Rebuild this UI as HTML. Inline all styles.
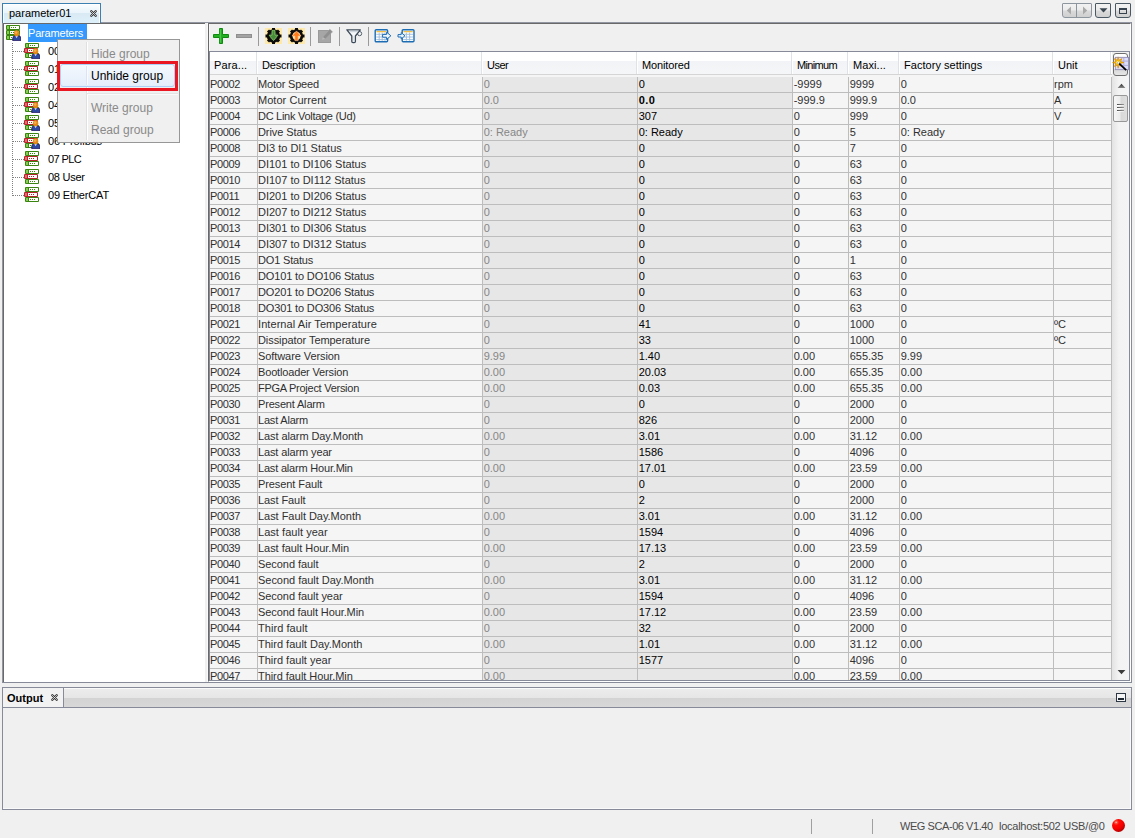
<!DOCTYPE html>
<html lang="en"><head><meta charset="utf-8"><title>parameter01</title>
<style>
html,body{margin:0;padding:0}
body{width:1135px;height:838px;overflow:hidden;background:#f0f0f0;position:relative;
 font-family:"Liberation Sans",sans-serif;font-size:11px;color:#000;line-height:13px}
div,span{box-sizing:border-box}
.abs{position:absolute}
#tab{position:absolute;z-index:3;left:2px;top:3px;width:99px;height:20px;border:1px solid #3c7fb1;border-bottom:none;
 background:linear-gradient(#fafdfe 0,#eaf4fb 45%,#d9eaf5 50%,#def0fa 100%);box-shadow:inset 1px 1px 0 #fff,inset -1px 0 0 #fff}
#tab span{position:absolute;left:6px;top:3px;white-space:nowrap}
#main{position:absolute;left:2px;top:22px;width:1130px;height:661px;border:1px solid;border-color:#9296a2 #868a99 #868a99 #9296a2;background:#f0f0f0}
#tree{position:absolute;left:3px;top:23px;width:202px;height:659px;background:#fff;border-left:1px solid #696969;border-top:1px solid #696969}
#split{position:absolute;left:205px;top:23px;width:3px;height:659px;background:#f0f0f0;border-right:1px solid #fafafa}
#rp{position:absolute;left:208px;top:23px;width:923px;height:659px;border:1px solid;border-color:#696969 #fff #fff #696969;background:#f0f0f0}
#toolbar{position:absolute;left:209px;top:24px;width:921px;height:27px;background:#f0f0f0;border-left:1px solid #f8f8f8}
.tsep{position:absolute;top:27px;width:1px;height:19px;background:#9a9a9a}
#tblwrap{position:absolute;left:209px;top:51px;width:921px;height:630px;border:1px solid #868a99;background:#f0f0f0;overflow:hidden}
#tbl{position:absolute;left:210px;top:52px;width:902px;height:628px;overflow:hidden}
#thead{position:absolute;left:0;top:0;width:902px;height:23px;background:linear-gradient(#fff 0,#fff 9px,#f1f3f6 9px,#f5f6f8 22px,#d5d5d5 22px,#d5d5d5 23px)}
.th{position:absolute;top:0;height:22px}
.th::after{content:'';position:absolute;right:0;top:0;width:1px;height:22px;background:#fff;border-left:1px solid #dfe2e7;box-sizing:content-box}
.th span{position:absolute;left:4px;top:7px;white-space:nowrap}
#tbody{position:absolute;left:0;top:23px;width:902px;height:605px;background:#f5f5f5}
.tr{position:absolute;left:0;margin-top:2px;width:902px;height:16px;border-bottom:1px solid #bdbdbd}
.td{position:absolute;top:0;height:15px;border-right:1px solid #bdbdbd;white-space:nowrap;overflow:hidden;padding:1px 0 0 0;color:#303030;box-sizing:border-box;line-height:13px}
.td.c2{background:#e7e7e7;color:#868686}
.td.c3{background:#e7e7e7;color:#000}
.td.c3 b{letter-spacing:0.5px}
#vsb{position:absolute;left:1112px;top:76px;width:17px;height:604px;background:linear-gradient(90deg,#e3e3e3,#f3f3f3 40%,#f4f4f4)}
#corner{position:absolute;left:1112px;top:52px;width:17px;height:24px;background:#f0f0f0}
#out{position:absolute;left:2px;top:687px;width:1130px;height:123px;border:1px solid #868a99;background:#f0f0f0;box-shadow:inset -1px -1px 0 #fafafa}
#outstrip{position:absolute;left:0;top:0;width:1128px;height:20px;border-bottom:1px solid #868a99;border-top:1px solid #fafafa;background:linear-gradient(#ececec 0,#e6e6e6 48%,#d3d3d3 52%,#d8d8d8 100%)}
#outtab{position:absolute;left:0;top:-1px;width:61px;height:19px;background:#f2f2f2;border-right:1px solid #868a99}
#outtab b{position:absolute;left:4px;top:4px}
.ssep{position:absolute;top:819px;width:1px;height:15px;background:#a0a0a0}
.status{position:absolute;top:820px;white-space:nowrap;color:#4a4a4a}
/* tree */
.tn{position:absolute;white-space:nowrap}
.ticon{position:absolute;width:16px;height:16px}
/* popup */
#menu{position:absolute;left:57px;top:39px;width:123px;height:104px;background:#f0f0f0;border:1px solid #979797;}
#menu .gut{position:absolute;left:28px;top:2px;width:1px;height:98px;background:#e0e0e0;border-right:1px solid #fff;box-sizing:content-box}
.mi{position:absolute;left:33px;white-space:nowrap;font-size:12px;color:#8a8a8a}

.tbtn{position:absolute;top:3px;height:15px;box-sizing:border-box;border:1px solid #4a5863;border-radius:1px 1px 3px 3px;background:linear-gradient(#f2f2f2 0,#ebebeb 48%,#dadada 52%,#d0d0d0 100%)}
.td.c2,.td.c3,.td.c4,.td.c5,.td.c6{padding-left:0.7px}
.td.c0{letter-spacing:-0.36px}

</style></head>
<body>
<div id="tab"><span>parameter01</span>
<svg class="abs" style="left:87px;top:6px" width="7" height="7" viewBox="0 0 8 8"><path d="M1.5 1.5 L6.5 6.5 M6.5 1.5 L1.5 6.5" stroke="#333" stroke-width="2.6" stroke-linecap="round"/><path d="M1.5 1.5 L6.5 6.5 M6.5 1.5 L1.5 6.5" stroke="#fff" stroke-width="0.8" stroke-linecap="round"/></svg>
</div>
<div id="main"></div>
<div id="tree"></div>
<div id="split"></div>
<div id="rp"></div>
<div id="toolbar"></div>
<div id="tblwrap"></div>

<div id="tbicons">
<svg class="abs" style="left:213px;top:28px" width="16" height="16" viewBox="0 0 16 16"><path d="M6.5 0.5 H9.5 V6.5 H15.5 V9.5 H9.5 V15.5 H6.5 V9.5 H0.5 V6.5 H6.5 Z" fill="#22b022" stroke="#0f8a0f" stroke-width="1" stroke-linejoin="round"/><path d="M7.3 1.5 V14.5" stroke="#5fd35f" stroke-width="0.8"/></svg>
<div class="abs" style="left:236px;top:34px;width:16px;height:4px;background:#a3a3a3;border:1px solid #8f8f8f"></div>
<div class="tsep" style="left:258px"></div>
<div class="tsep" style="left:310px"></div>
<div class="tsep" style="left:339px"></div>
<div class="tsep" style="left:368px"></div>
</div>
<div id="tbicons2">
<!-- gear down -->
<svg class="abs" style="left:265px;top:28px" width="17" height="16" viewBox="0 0 17 16">
<rect width="17" height="16" fill="#ffe9a9"/>
<g fill="#0b0b0b"><rect x="7" y="0" width="3" height="16"/><rect x="0.5" y="6.5" width="16" height="3"/>
<rect x="7" y="0.2" width="3" height="15.6" transform="rotate(45 8.5 8)"/><rect x="7" y="0.2" width="3" height="15.6" transform="rotate(-45 8.5 8)"/></g>
<circle cx="8.5" cy="8" r="5.2" fill="none" stroke="#0b0b0b" stroke-width="3"/>
<circle cx="8.5" cy="8" r="3.9" fill="#2c2c2c"/>
<path d="M7 2.4 H10 V7.2 H12.9 L8.5 12.6 L4.1 7.2 H7 Z" fill="#448c38" stroke="#93dd6e" stroke-width="0.7" stroke-linejoin="round"/>
</svg>
<!-- gear up -->
<svg class="abs" style="left:288px;top:28px" width="17" height="16" viewBox="0 0 17 16">
<rect width="17" height="16" fill="#ffe9a9"/>
<g fill="#0b0b0b"><rect x="7" y="0" width="3" height="16"/><rect x="0.5" y="6.5" width="16" height="3"/>
<rect x="7" y="0.2" width="3" height="15.6" transform="rotate(45 8.5 8)"/><rect x="7" y="0.2" width="3" height="15.6" transform="rotate(-45 8.5 8)"/></g>
<circle cx="8.5" cy="8" r="5.2" fill="none" stroke="#0b0b0b" stroke-width="3"/>
<circle cx="8.5" cy="8" r="3.9" fill="#ffe9a9"/>
<path d="M8.5 2.9 L13 8 H10.1 V12.6 H6.9 V8 H4 Z" fill="#ff7d1c" stroke="#ffc693" stroke-width="0.6" stroke-linejoin="round"/>
</svg>
<!-- edit (disabled) -->
<svg class="abs" style="left:318px;top:28px" width="16" height="16" viewBox="0 0 16 16">
<rect x="0.5" y="2.5" width="12" height="12" fill="#a6a6a6" stroke="#9a9a9a"/>
<path d="M4 11.8 L4.8 9 L11.8 1.2 L14.6 3.8 L7.4 11 Z" fill="#8f8f8f" stroke="#aaaaaa" stroke-width="0.5"/>
<path d="M4 11.8 L4.8 9 L7.4 11 Z" fill="#b9b9b9"/>
</svg>
<!-- funnel -->
<svg class="abs" style="left:346px;top:28px" width="17" height="16" viewBox="0 0 17 16">
<circle cx="13.6" cy="5.6" r="2.1" fill="#f4f4f4" stroke="#56626e" stroke-width="1"/>
<path d="M0.9 1.8 H14.3 L9.4 8 V13.6 Q9.4 14.7 8.2 14.7 H7 Q5.8 14.7 5.8 13.6 V8 Z" fill="#f6f7f9" stroke="#3d4a58" stroke-width="1.3" stroke-linejoin="round"/>
<path d="M2.6 2.7 H12.6 L11.4 4.2 H3.8 Z" fill="#cfd6dd"/>
<path d="M8.2 8.2 V13.6" stroke="#c8cfd6" stroke-width="1.2"/>
</svg>
<!-- export -->
<svg class="abs" style="left:374px;top:28px" width="18" height="16" viewBox="0 0 18 16">
<rect x="1.2" y="1.8" width="12.4" height="12" rx="1" fill="#fff" stroke="#1c6db4" stroke-width="1.4"/>
<rect x="2.4" y="3" width="10" height="1.3" fill="#f2bf4a"/>
<path d="M2.2 6.3 H12.6 M2.2 9 H12.6 M2.2 11.6 H12.6 M5.2 4.6 V12.8 M8.2 4.6 V12.8 M11 4.6 V12.8" stroke="#9dbbdc" stroke-width="0.9" fill="none"/>
<path d="M8.6 6.4 H12.6 V4.2 L16.9 7.8 L12.6 11.4 V9.2 H8.6 Z" fill="#eef6ff" stroke="#1c6db4" stroke-width="1" stroke-linejoin="round"/>
</svg>
<!-- import -->
<svg class="abs" style="left:397px;top:28px" width="18" height="16" viewBox="0 0 18 16">
<rect x="5.2" y="1.8" width="11.8" height="12" rx="1" fill="#fff" stroke="#1c6db4" stroke-width="1.4"/>
<rect x="6.4" y="3" width="9.4" height="1.3" fill="#f2bf4a"/>
<path d="M6.2 6.3 H16 M6.2 9 H16 M6.2 11.6 H16 M9.4 4.6 V12.8 M12.6 4.6 V12.8" stroke="#9dbbdc" stroke-width="0.9" fill="none"/>
<path d="M1 6.6 H4.2 V4.6 L7.9 7.8 L4.2 11 V9 H1 Z" fill="#eef6ff" stroke="#1c6db4" stroke-width="1" stroke-linejoin="round"/>
</svg>
</div>
<div id="trb">
<div class="tbtn" style="left:1062px;width:30px;border-color:#8d969e"></div>
<div class="abs" style="left:1076px;top:4px;width:1px;height:13px;background:#8c949c"></div>
<svg class="abs" style="left:1066px;top:6px" width="6" height="9" viewBox="0 0 6 9"><path d="M5 0.5 L0.8 4.5 L5 8.5 Z" fill="#a9a9a9"/></svg>
<svg class="abs" style="left:1082px;top:6px" width="6" height="9" viewBox="0 0 6 9"><path d="M1 0.5 L5.2 4.5 L1 8.5 Z" fill="#a9a9a9"/></svg>
<div class="tbtn" style="left:1095px;width:16px"></div>
<svg class="abs" style="left:1099px;top:8px" width="9" height="5" viewBox="0 0 9 5"><path d="M0.5 0.3 H8.5 L4.5 4.6 Z" fill="#3a4650"/></svg>
<div class="tbtn" style="left:1115px;width:16px"></div>
<div class="abs" style="left:1119px;top:8px;width:8px;height:6px;border:1px solid #36434e;border-top-width:2px"></div>
</div>

<div id="tbl">
<div id="thead">
<div class="th" style="left:0px;width:48px"><span style="letter-spacing:0.128px">Para...</span></div>
<div class="th" style="left:48px;width:225px"><span style="letter-spacing:-0.176px">Description</span></div>
<div class="th" style="left:273px;width:155px"><span style="letter-spacing:-0.484px">User</span></div>
<div class="th" style="left:428px;width:155px"><span style="letter-spacing:-0.136px">Monitored</span></div>
<div class="th" style="left:583px;width:56px"><span style="letter-spacing:-0.675px">Minimum</span></div>
<div class="th" style="left:639px;width:51px"><span style="letter-spacing:0.085px">Maxi...</span></div>
<div class="th" style="left:690px;width:154px"><span style="letter-spacing:0.035px">Factory settings</span></div>
<div class="th" style="left:844px;width:58px"><span style="letter-spacing:-0.016px">Unit</span></div>
</div>
<div id="tbody">
<div class="tr" style="top:0px">
<div class="td c0" style="left:0px;width:48px">P0002</div>
<div class="td c1" style="left:48px;width:225px"><span style="letter-spacing:-0.189px">Motor Speed</span></div>
<div class="td c2" style="left:273px;width:155px">0</div>
<div class="td c3" style="left:428px;width:155px">0</div>
<div class="td c4" style="left:583px;width:56px">-9999</div>
<div class="td c5" style="left:639px;width:51px">9999</div>
<div class="td c6" style="left:690px;width:154px">0</div>
<div class="td c7" style="left:844px;width:58px">rpm</div>
</div>
<div class="tr" style="top:16px">
<div class="td c0" style="left:0px;width:48px">P0003</div>
<div class="td c1" style="left:48px;width:225px"><span style="letter-spacing:0.042px">Motor Current</span></div>
<div class="td c2" style="left:273px;width:155px">0.0</div>
<div class="td c3" style="left:428px;width:155px"><b>0.0</b></div>
<div class="td c4" style="left:583px;width:56px">-999.9</div>
<div class="td c5" style="left:639px;width:51px">999.9</div>
<div class="td c6" style="left:690px;width:154px">0.0</div>
<div class="td c7" style="left:844px;width:58px">A</div>
</div>
<div class="tr" style="top:32px">
<div class="td c0" style="left:0px;width:48px">P0004</div>
<div class="td c1" style="left:48px;width:225px"><span style="letter-spacing:-0.281px">DC Link Voltage (Ud)</span></div>
<div class="td c2" style="left:273px;width:155px">0</div>
<div class="td c3" style="left:428px;width:155px">307</div>
<div class="td c4" style="left:583px;width:56px">0</div>
<div class="td c5" style="left:639px;width:51px">999</div>
<div class="td c6" style="left:690px;width:154px">0</div>
<div class="td c7" style="left:844px;width:58px">V</div>
</div>
<div class="tr" style="top:48px">
<div class="td c0" style="left:0px;width:48px">P0006</div>
<div class="td c1" style="left:48px;width:225px"><span style="letter-spacing:-0.085px">Drive Status</span></div>
<div class="td c2" style="left:273px;width:155px">0: Ready</div>
<div class="td c3" style="left:428px;width:155px">0: Ready</div>
<div class="td c4" style="left:583px;width:56px">0</div>
<div class="td c5" style="left:639px;width:51px">5</div>
<div class="td c6" style="left:690px;width:154px">0: Ready</div>
<div class="td c7" style="left:844px;width:58px"></div>
</div>
<div class="tr" style="top:64px">
<div class="td c0" style="left:0px;width:48px">P0008</div>
<div class="td c1" style="left:48px;width:225px">DI3 to DI1 Status</div>
<div class="td c2" style="left:273px;width:155px">0</div>
<div class="td c3" style="left:428px;width:155px">0</div>
<div class="td c4" style="left:583px;width:56px">0</div>
<div class="td c5" style="left:639px;width:51px">7</div>
<div class="td c6" style="left:690px;width:154px">0</div>
<div class="td c7" style="left:844px;width:58px"></div>
</div>
<div class="tr" style="top:80px">
<div class="td c0" style="left:0px;width:48px">P0009</div>
<div class="td c1" style="left:48px;width:225px">DI101 to DI106 Status</div>
<div class="td c2" style="left:273px;width:155px">0</div>
<div class="td c3" style="left:428px;width:155px">0</div>
<div class="td c4" style="left:583px;width:56px">0</div>
<div class="td c5" style="left:639px;width:51px">63</div>
<div class="td c6" style="left:690px;width:154px">0</div>
<div class="td c7" style="left:844px;width:58px"></div>
</div>
<div class="tr" style="top:96px">
<div class="td c0" style="left:0px;width:48px">P0010</div>
<div class="td c1" style="left:48px;width:225px">DI107 to DI112 Status</div>
<div class="td c2" style="left:273px;width:155px">0</div>
<div class="td c3" style="left:428px;width:155px">0</div>
<div class="td c4" style="left:583px;width:56px">0</div>
<div class="td c5" style="left:639px;width:51px">63</div>
<div class="td c6" style="left:690px;width:154px">0</div>
<div class="td c7" style="left:844px;width:58px"></div>
</div>
<div class="tr" style="top:112px">
<div class="td c0" style="left:0px;width:48px">P0011</div>
<div class="td c1" style="left:48px;width:225px">DI201 to DI206 Status</div>
<div class="td c2" style="left:273px;width:155px">0</div>
<div class="td c3" style="left:428px;width:155px">0</div>
<div class="td c4" style="left:583px;width:56px">0</div>
<div class="td c5" style="left:639px;width:51px">63</div>
<div class="td c6" style="left:690px;width:154px">0</div>
<div class="td c7" style="left:844px;width:58px"></div>
</div>
<div class="tr" style="top:128px">
<div class="td c0" style="left:0px;width:48px">P0012</div>
<div class="td c1" style="left:48px;width:225px">DI207 to DI212 Status</div>
<div class="td c2" style="left:273px;width:155px">0</div>
<div class="td c3" style="left:428px;width:155px">0</div>
<div class="td c4" style="left:583px;width:56px">0</div>
<div class="td c5" style="left:639px;width:51px">63</div>
<div class="td c6" style="left:690px;width:154px">0</div>
<div class="td c7" style="left:844px;width:58px"></div>
</div>
<div class="tr" style="top:144px">
<div class="td c0" style="left:0px;width:48px">P0013</div>
<div class="td c1" style="left:48px;width:225px">DI301 to DI306 Status</div>
<div class="td c2" style="left:273px;width:155px">0</div>
<div class="td c3" style="left:428px;width:155px">0</div>
<div class="td c4" style="left:583px;width:56px">0</div>
<div class="td c5" style="left:639px;width:51px">63</div>
<div class="td c6" style="left:690px;width:154px">0</div>
<div class="td c7" style="left:844px;width:58px"></div>
</div>
<div class="tr" style="top:160px">
<div class="td c0" style="left:0px;width:48px">P0014</div>
<div class="td c1" style="left:48px;width:225px">DI307 to DI312 Status</div>
<div class="td c2" style="left:273px;width:155px">0</div>
<div class="td c3" style="left:428px;width:155px">0</div>
<div class="td c4" style="left:583px;width:56px">0</div>
<div class="td c5" style="left:639px;width:51px">63</div>
<div class="td c6" style="left:690px;width:154px">0</div>
<div class="td c7" style="left:844px;width:58px"></div>
</div>
<div class="tr" style="top:176px">
<div class="td c0" style="left:0px;width:48px">P0015</div>
<div class="td c1" style="left:48px;width:225px"><span style="letter-spacing:-0.176px">DO1 Status</span></div>
<div class="td c2" style="left:273px;width:155px">0</div>
<div class="td c3" style="left:428px;width:155px">0</div>
<div class="td c4" style="left:583px;width:56px">0</div>
<div class="td c5" style="left:639px;width:51px">1</div>
<div class="td c6" style="left:690px;width:154px">0</div>
<div class="td c7" style="left:844px;width:58px"></div>
</div>
<div class="tr" style="top:192px">
<div class="td c0" style="left:0px;width:48px">P0016</div>
<div class="td c1" style="left:48px;width:225px"><span style="letter-spacing:-0.144px">DO101 to DO106 Status</span></div>
<div class="td c2" style="left:273px;width:155px">0</div>
<div class="td c3" style="left:428px;width:155px">0</div>
<div class="td c4" style="left:583px;width:56px">0</div>
<div class="td c5" style="left:639px;width:51px">63</div>
<div class="td c6" style="left:690px;width:154px">0</div>
<div class="td c7" style="left:844px;width:58px"></div>
</div>
<div class="tr" style="top:208px">
<div class="td c0" style="left:0px;width:48px">P0017</div>
<div class="td c1" style="left:48px;width:225px"><span style="letter-spacing:-0.144px">DO201 to DO206 Status</span></div>
<div class="td c2" style="left:273px;width:155px">0</div>
<div class="td c3" style="left:428px;width:155px">0</div>
<div class="td c4" style="left:583px;width:56px">0</div>
<div class="td c5" style="left:639px;width:51px">63</div>
<div class="td c6" style="left:690px;width:154px">0</div>
<div class="td c7" style="left:844px;width:58px"></div>
</div>
<div class="tr" style="top:224px">
<div class="td c0" style="left:0px;width:48px">P0018</div>
<div class="td c1" style="left:48px;width:225px"><span style="letter-spacing:-0.144px">DO301 to DO306 Status</span></div>
<div class="td c2" style="left:273px;width:155px">0</div>
<div class="td c3" style="left:428px;width:155px">0</div>
<div class="td c4" style="left:583px;width:56px">0</div>
<div class="td c5" style="left:639px;width:51px">63</div>
<div class="td c6" style="left:690px;width:154px">0</div>
<div class="td c7" style="left:844px;width:58px"></div>
</div>
<div class="tr" style="top:240px">
<div class="td c0" style="left:0px;width:48px">P0021</div>
<div class="td c1" style="left:48px;width:225px"><span style="letter-spacing:0.071px">Internal Air Temperature</span></div>
<div class="td c2" style="left:273px;width:155px">0</div>
<div class="td c3" style="left:428px;width:155px">41</div>
<div class="td c4" style="left:583px;width:56px">0</div>
<div class="td c5" style="left:639px;width:51px">1000</div>
<div class="td c6" style="left:690px;width:154px">0</div>
<div class="td c7" style="left:844px;width:58px">ºC</div>
</div>
<div class="tr" style="top:256px">
<div class="td c0" style="left:0px;width:48px">P0022</div>
<div class="td c1" style="left:48px;width:225px"><span style="letter-spacing:-0.069px">Dissipator Temperature</span></div>
<div class="td c2" style="left:273px;width:155px">0</div>
<div class="td c3" style="left:428px;width:155px">33</div>
<div class="td c4" style="left:583px;width:56px">0</div>
<div class="td c5" style="left:639px;width:51px">1000</div>
<div class="td c6" style="left:690px;width:154px">0</div>
<div class="td c7" style="left:844px;width:58px">ºC</div>
</div>
<div class="tr" style="top:272px">
<div class="td c0" style="left:0px;width:48px">P0023</div>
<div class="td c1" style="left:48px;width:225px"><span style="letter-spacing:-0.079px">Software Version</span></div>
<div class="td c2" style="left:273px;width:155px">9.99</div>
<div class="td c3" style="left:428px;width:155px">1.40</div>
<div class="td c4" style="left:583px;width:56px">0.00</div>
<div class="td c5" style="left:639px;width:51px">655.35</div>
<div class="td c6" style="left:690px;width:154px">9.99</div>
<div class="td c7" style="left:844px;width:58px"></div>
</div>
<div class="tr" style="top:288px">
<div class="td c0" style="left:0px;width:48px">P0024</div>
<div class="td c1" style="left:48px;width:225px"><span style="letter-spacing:-0.159px">Bootloader Version</span></div>
<div class="td c2" style="left:273px;width:155px">0.00</div>
<div class="td c3" style="left:428px;width:155px">20.03</div>
<div class="td c4" style="left:583px;width:56px">0.00</div>
<div class="td c5" style="left:639px;width:51px">655.35</div>
<div class="td c6" style="left:690px;width:154px">0.00</div>
<div class="td c7" style="left:844px;width:58px"></div>
</div>
<div class="tr" style="top:304px">
<div class="td c0" style="left:0px;width:48px">P0025</div>
<div class="td c1" style="left:48px;width:225px"><span style="letter-spacing:-0.27px">FPGA Project Version</span></div>
<div class="td c2" style="left:273px;width:155px">0.00</div>
<div class="td c3" style="left:428px;width:155px">0.03</div>
<div class="td c4" style="left:583px;width:56px">0.00</div>
<div class="td c5" style="left:639px;width:51px">655.35</div>
<div class="td c6" style="left:690px;width:154px">0.00</div>
<div class="td c7" style="left:844px;width:58px"></div>
</div>
<div class="tr" style="top:320px">
<div class="td c0" style="left:0px;width:48px">P0030</div>
<div class="td c1" style="left:48px;width:225px"><span style="letter-spacing:-0.176px">Present Alarm</span></div>
<div class="td c2" style="left:273px;width:155px">0</div>
<div class="td c3" style="left:428px;width:155px">0</div>
<div class="td c4" style="left:583px;width:56px">0</div>
<div class="td c5" style="left:639px;width:51px">2000</div>
<div class="td c6" style="left:690px;width:154px">0</div>
<div class="td c7" style="left:844px;width:58px"></div>
</div>
<div class="tr" style="top:336px">
<div class="td c0" style="left:0px;width:48px">P0031</div>
<div class="td c1" style="left:48px;width:225px"><span style="letter-spacing:-0.197px">Last Alarm</span></div>
<div class="td c2" style="left:273px;width:155px">0</div>
<div class="td c3" style="left:428px;width:155px">826</div>
<div class="td c4" style="left:583px;width:56px">0</div>
<div class="td c5" style="left:639px;width:51px">2000</div>
<div class="td c6" style="left:690px;width:154px">0</div>
<div class="td c7" style="left:844px;width:58px"></div>
</div>
<div class="tr" style="top:352px">
<div class="td c0" style="left:0px;width:48px">P0032</div>
<div class="td c1" style="left:48px;width:225px"><span style="letter-spacing:-0.09px">Last alarm Day.Month</span></div>
<div class="td c2" style="left:273px;width:155px">0.00</div>
<div class="td c3" style="left:428px;width:155px">3.01</div>
<div class="td c4" style="left:583px;width:56px">0.00</div>
<div class="td c5" style="left:639px;width:51px">31.12</div>
<div class="td c6" style="left:690px;width:154px">0.00</div>
<div class="td c7" style="left:844px;width:58px"></div>
</div>
<div class="tr" style="top:368px">
<div class="td c0" style="left:0px;width:48px">P0033</div>
<div class="td c1" style="left:48px;width:225px"><span style="letter-spacing:-0.127px">Last alarm year</span></div>
<div class="td c2" style="left:273px;width:155px">0</div>
<div class="td c3" style="left:428px;width:155px">1586</div>
<div class="td c4" style="left:583px;width:56px">0</div>
<div class="td c5" style="left:639px;width:51px">4096</div>
<div class="td c6" style="left:690px;width:154px">0</div>
<div class="td c7" style="left:844px;width:58px"></div>
</div>
<div class="tr" style="top:384px">
<div class="td c0" style="left:0px;width:48px">P0034</div>
<div class="td c1" style="left:48px;width:225px"><span style="letter-spacing:-0.191px">Last alarm Hour.Min</span></div>
<div class="td c2" style="left:273px;width:155px">0.00</div>
<div class="td c3" style="left:428px;width:155px">17.01</div>
<div class="td c4" style="left:583px;width:56px">0.00</div>
<div class="td c5" style="left:639px;width:51px">23.59</div>
<div class="td c6" style="left:690px;width:154px">0.00</div>
<div class="td c7" style="left:844px;width:58px"></div>
</div>
<div class="tr" style="top:400px">
<div class="td c0" style="left:0px;width:48px">P0035</div>
<div class="td c1" style="left:48px;width:225px"><span style="letter-spacing:-0.086px">Present Fault</span></div>
<div class="td c2" style="left:273px;width:155px">0</div>
<div class="td c3" style="left:428px;width:155px">0</div>
<div class="td c4" style="left:583px;width:56px">0</div>
<div class="td c5" style="left:639px;width:51px">2000</div>
<div class="td c6" style="left:690px;width:154px">0</div>
<div class="td c7" style="left:844px;width:58px"></div>
</div>
<div class="tr" style="top:416px">
<div class="td c0" style="left:0px;width:48px">P0036</div>
<div class="td c1" style="left:48px;width:225px"><span style="letter-spacing:-0.081px">Last Fault</span></div>
<div class="td c2" style="left:273px;width:155px">0</div>
<div class="td c3" style="left:428px;width:155px">2</div>
<div class="td c4" style="left:583px;width:56px">0</div>
<div class="td c5" style="left:639px;width:51px">2000</div>
<div class="td c6" style="left:690px;width:154px">0</div>
<div class="td c7" style="left:844px;width:58px"></div>
</div>
<div class="tr" style="top:432px">
<div class="td c0" style="left:0px;width:48px">P0037</div>
<div class="td c1" style="left:48px;width:225px"><span style="letter-spacing:-0.037px">Last Fault Day.Month</span></div>
<div class="td c2" style="left:273px;width:155px">0.00</div>
<div class="td c3" style="left:428px;width:155px">3.01</div>
<div class="td c4" style="left:583px;width:56px">0.00</div>
<div class="td c5" style="left:639px;width:51px">31.12</div>
<div class="td c6" style="left:690px;width:154px">0.00</div>
<div class="td c7" style="left:844px;width:58px"></div>
</div>
<div class="tr" style="top:448px">
<div class="td c0" style="left:0px;width:48px">P0038</div>
<div class="td c1" style="left:48px;width:225px"><span style="letter-spacing:0.04px">Last fault year</span></div>
<div class="td c2" style="left:273px;width:155px">0</div>
<div class="td c3" style="left:428px;width:155px">1594</div>
<div class="td c4" style="left:583px;width:56px">0</div>
<div class="td c5" style="left:639px;width:51px">4096</div>
<div class="td c6" style="left:690px;width:154px">0</div>
<div class="td c7" style="left:844px;width:58px"></div>
</div>
<div class="tr" style="top:464px">
<div class="td c0" style="left:0px;width:48px">P0039</div>
<div class="td c1" style="left:48px;width:225px"><span style="letter-spacing:-0.038px">Last fault Hour.Min</span></div>
<div class="td c2" style="left:273px;width:155px">0.00</div>
<div class="td c3" style="left:428px;width:155px">17.13</div>
<div class="td c4" style="left:583px;width:56px">0.00</div>
<div class="td c5" style="left:639px;width:51px">23.59</div>
<div class="td c6" style="left:690px;width:154px">0.00</div>
<div class="td c7" style="left:844px;width:58px"></div>
</div>
<div class="tr" style="top:480px">
<div class="td c0" style="left:0px;width:48px">P0040</div>
<div class="td c1" style="left:48px;width:225px"><span style="letter-spacing:-0.063px">Second fault</span></div>
<div class="td c2" style="left:273px;width:155px">0</div>
<div class="td c3" style="left:428px;width:155px">2</div>
<div class="td c4" style="left:583px;width:56px">0</div>
<div class="td c5" style="left:639px;width:51px">2000</div>
<div class="td c6" style="left:690px;width:154px">0</div>
<div class="td c7" style="left:844px;width:58px"></div>
</div>
<div class="tr" style="top:496px">
<div class="td c0" style="left:0px;width:48px">P0041</div>
<div class="td c1" style="left:48px;width:225px"><span style="letter-spacing:-0.032px">Second fault Day.Month</span></div>
<div class="td c2" style="left:273px;width:155px">0.00</div>
<div class="td c3" style="left:428px;width:155px">3.01</div>
<div class="td c4" style="left:583px;width:56px">0.00</div>
<div class="td c5" style="left:639px;width:51px">31.12</div>
<div class="td c6" style="left:690px;width:154px">0.00</div>
<div class="td c7" style="left:844px;width:58px"></div>
</div>
<div class="tr" style="top:512px">
<div class="td c0" style="left:0px;width:48px">P0042</div>
<div class="td c1" style="left:48px;width:225px"><span style="letter-spacing:-0.06px">Second fault year</span></div>
<div class="td c2" style="left:273px;width:155px">0</div>
<div class="td c3" style="left:428px;width:155px">1594</div>
<div class="td c4" style="left:583px;width:56px">0</div>
<div class="td c5" style="left:639px;width:51px">4096</div>
<div class="td c6" style="left:690px;width:154px">0</div>
<div class="td c7" style="left:844px;width:58px"></div>
</div>
<div class="tr" style="top:528px">
<div class="td c0" style="left:0px;width:48px">P0043</div>
<div class="td c1" style="left:48px;width:225px"><span style="letter-spacing:-0.106px">Second fault Hour.Min</span></div>
<div class="td c2" style="left:273px;width:155px">0.00</div>
<div class="td c3" style="left:428px;width:155px">17.12</div>
<div class="td c4" style="left:583px;width:56px">0.00</div>
<div class="td c5" style="left:639px;width:51px">23.59</div>
<div class="td c6" style="left:690px;width:154px">0.00</div>
<div class="td c7" style="left:844px;width:58px"></div>
</div>
<div class="tr" style="top:544px">
<div class="td c0" style="left:0px;width:48px">P0044</div>
<div class="td c1" style="left:48px;width:225px"><span style="letter-spacing:0.053px">Third fault</span></div>
<div class="td c2" style="left:273px;width:155px">0</div>
<div class="td c3" style="left:428px;width:155px">32</div>
<div class="td c4" style="left:583px;width:56px">0</div>
<div class="td c5" style="left:639px;width:51px">2000</div>
<div class="td c6" style="left:690px;width:154px">0</div>
<div class="td c7" style="left:844px;width:58px"></div>
</div>
<div class="tr" style="top:560px">
<div class="td c0" style="left:0px;width:48px">P0045</div>
<div class="td c1" style="left:48px;width:225px">Third fault Day.Month</div>
<div class="td c2" style="left:273px;width:155px">0.00</div>
<div class="td c3" style="left:428px;width:155px">1.01</div>
<div class="td c4" style="left:583px;width:56px">0.00</div>
<div class="td c5" style="left:639px;width:51px">31.12</div>
<div class="td c6" style="left:690px;width:154px">0.00</div>
<div class="td c7" style="left:844px;width:58px"></div>
</div>
<div class="tr" style="top:576px">
<div class="td c0" style="left:0px;width:48px">P0046</div>
<div class="td c1" style="left:48px;width:225px">Third fault year</div>
<div class="td c2" style="left:273px;width:155px">0</div>
<div class="td c3" style="left:428px;width:155px">1577</div>
<div class="td c4" style="left:583px;width:56px">0</div>
<div class="td c5" style="left:639px;width:51px">4096</div>
<div class="td c6" style="left:690px;width:154px">0</div>
<div class="td c7" style="left:844px;width:58px"></div>
</div>
<div class="tr" style="top:592px">
<div class="td c0" style="left:0px;width:48px">P0047</div>
<div class="td c1" style="left:48px;width:225px"><span style="letter-spacing:-0.059px">Third fault Hour.Min</span></div>
<div class="td c2" style="left:273px;width:155px">0.00</div>
<div class="td c3" style="left:428px;width:155px"></div>
<div class="td c4" style="left:583px;width:56px">0.00</div>
<div class="td c5" style="left:639px;width:51px">23.59</div>
<div class="td c6" style="left:690px;width:154px">0.00</div>
<div class="td c7" style="left:844px;width:58px"></div>
</div>
</div>
</div>
<div id="corner"></div>
<div class="abs" style="left:1113px;top:53px;width:15px;height:23px;border:1px solid #6f6f6f;border-radius:3px;background:linear-gradient(#fff 0,#fdfdfd 70%,#d9d9d9 75%,#e6e6e6 100%)"></div>
<svg class="abs" style="left:1112px;top:55px" width="17" height="17" viewBox="0 0 18 18">
<rect x="3.5" y="2.5" width="14" height="13" fill="#dcdcfb" stroke="#9490ba"/>
<path d="M12.5 3 V15 M3.5 6.5 H17 M3.5 11 H17" stroke="#aeabd6" stroke-width="1" fill="none"/>
<path d="M6.5 2 L7.4 5.6 L10.6 3.8 L8.8 7 L12.6 8 L8.8 9 L10.4 12.2 L7.4 10.4 L6.5 14 L5.6 10.4 L2.6 12.2 L4.2 9 L0.6 8 L4.2 7 L2.4 3.8 L5.6 5.6 Z" fill="#ffc400" stroke="#d98a00" stroke-width="0.7"/>
<circle cx="6.5" cy="8" r="1.7" fill="#fff6c0"/>
<path d="M6 7.5 L15 16" stroke="#000" stroke-width="1.9"/>
<path d="M6 7.5 L7.6 9" stroke="#fff" stroke-width="1.6"/>
</svg>
<div id="vsb">
<svg class="abs" style="left:5px;top:7px" width="9" height="6" viewBox="0 0 9 6"><defs><linearGradient id="ag" x1="0" y1="0" x2="0" y2="1"><stop offset="0" stop-color="#2e2e2e"/><stop offset="1" stop-color="#8a8a8a"/></linearGradient></defs><path d="M0.6 5 L4.5 0.8 L8.4 5 Z" fill="url(#ag)"/></svg>
<div class="abs" style="left:1px;top:19px;width:15px;height:27px;border:1px solid #979797;border-radius:2px;background:linear-gradient(90deg,#f6f6f6 0,#ececec 45%,#d8d8d8 55%,#dedede 100%)"></div>
<div class="abs" style="left:5px;top:28px;width:7px;height:9px;background:linear-gradient(#4a4a4a 0 1px,#fff 1px 2px,transparent 2px 3px,#4a4a4a 3px 4px,#fff 4px 5px,transparent 5px 6px,#4a4a4a 6px 7px,#fff 7px 8px,transparent 8px);-webkit-mask-image:linear-gradient(90deg,#000,rgba(0,0,0,.45));mask-image:linear-gradient(90deg,#000,rgba(0,0,0,.45))"></div>
<svg class="abs" style="left:5px;top:593px" width="9" height="6" viewBox="0 0 9 6"><path d="M0.6 1 L8.4 1 L4.5 5.2 Z" fill="#3c3c3c"/></svg>
</div>
<div id="out"><div id="outstrip"><div id="outtab"><b>Output</b>
<svg class="abs" style="left:48px;top:6px" width="7" height="7" viewBox="0 0 8 8"><path d="M1.5 1.5 L6.5 6.5 M6.5 1.5 L1.5 6.5" stroke="#333" stroke-width="2.6" stroke-linecap="round"/><path d="M1.5 1.5 L6.5 6.5 M6.5 1.5 L1.5 6.5" stroke="#fff" stroke-width="0.8" stroke-linecap="round"/></svg>
</div>
<div class="abs" style="left:1113px;top:4px;width:10px;height:9px;border:1px solid #2e3844;background:#f4f4f4"></div>
<div class="abs" style="left:1115px;top:9px;width:6px;height:2px;background:#1e2630"></div>
</div></div>
<div class="ssep" style="left:811px"></div>
<div class="ssep" style="left:872px"></div>
<div class="status" style="left:900px;letter-spacing:-0.435px">WEG SCA-06 V1.40</div>
<div class="status" style="left:999px;letter-spacing:-0.257px">localhost:502 USB/@0</div>
<div class="abs" style="left:1112px;top:819px;width:13px;height:13px;border-radius:50%;background:radial-gradient(circle at 32% 26%,#ffd0c8 0,#ff5040 9%,#ff0a05 22%,#f60000 50%,#b00000 78%,#700000 100%)"></div>

<div id="treec">
<div class="abs" style="left:12px;top:42px;width:1px;height:154px;background:repeating-linear-gradient(#fff 0 1px,#808080 1px 2px)"></div>
<svg class="ticon" style="left:5px;top:25px" width="16" height="16" viewBox="0 0 16 16"><rect x="1" y="0" width="14" height="5" rx="1" fill="#3a850f"/><rect x="2" y="1" width="2" height="3" fill="#84d04c"/><rect x="5" y="1" width="9" height="3" fill="#fff"/><rect x="6" y="2" width="1" height="1" fill="#3a850f"/><rect x="8" y="2" width="1" height="1" fill="#3a850f"/><rect x="10" y="2" width="1" height="1" fill="#3a850f"/><rect x="1" y="5" width="14" height="5" rx="1" fill="#3a850f"/><rect x="2" y="6" width="2" height="3" fill="#84d04c"/><rect x="5" y="6" width="9" height="3" fill="#fff"/><rect x="6" y="7" width="1" height="1" fill="#3a850f"/><rect x="8" y="7" width="1" height="1" fill="#3a850f"/><rect x="10" y="7" width="1" height="1" fill="#3a850f"/><rect x="1" y="10" width="14" height="5" rx="1" fill="#3a850f"/><rect x="2" y="11" width="2" height="3" fill="#84d04c"/><rect x="5" y="11" width="9" height="3" fill="#fff"/><rect x="6" y="12" width="1" height="1" fill="#3a850f"/><rect x="8" y="12" width="1" height="1" fill="#3a850f"/><rect x="10" y="12" width="1" height="1" fill="#3a850f"/><path d="M7.8 15.8 V13.2 Q7.8 10.9 10 10.9 H13.4 Q15.9 10.9 15.9 13.2 V15.8 Z" fill="#2c4aa0" stroke="#2a1760" stroke-width="0.9"/><path d="M10.3 11 L11.6 13.2 L12.9 11 Z" fill="#c9d6f2"/><ellipse cx="11.6" cy="8.3" rx="2.7" ry="3" fill="#e58a1a"/><circle cx="11.2" cy="7.6" r="1.3" fill="#f6ae4a"/></svg>
<div class="abs" style="left:28px;top:24px;width:59px;height:18px;background:#3399ff"></div>
<div class="tn" style="left:28px;top:27px;color:#fff;letter-spacing:-0.19px">Parameters</div>
<div class="abs" style="left:13px;top:51px;width:11px;height:1px;background:repeating-linear-gradient(90deg,#808080 0 1px,#fff 1px 2px)"></div>
<svg class="ticon" style="left:24px;top:43px" width="16" height="16" viewBox="0 0 16 16"><rect x="1" y="0" width="14" height="5" rx="1" fill="#3a850f"/><rect x="2" y="1" width="2" height="3" fill="#84d04c"/><rect x="5" y="1" width="9" height="3" fill="#fff"/><rect x="6" y="2" width="1" height="1" fill="#3a850f"/><rect x="8" y="2" width="1" height="1" fill="#3a850f"/><rect x="10" y="2" width="1" height="1" fill="#3a850f"/><rect x="0" y="5" width="14" height="5" rx="1" fill="#b3252b"/><rect x="1" y="6" width="2" height="3" fill="#ea6b6b"/><rect x="4" y="6" width="9" height="3" fill="#fff"/><rect x="5" y="7" width="1" height="1" fill="#b3252b"/><rect x="7" y="7" width="1" height="1" fill="#b3252b"/><rect x="9" y="7" width="1" height="1" fill="#b3252b"/><rect x="1" y="10" width="14" height="5" rx="1" fill="#3a850f"/><rect x="2" y="11" width="2" height="3" fill="#84d04c"/><rect x="5" y="11" width="9" height="3" fill="#fff"/><rect x="6" y="12" width="1" height="1" fill="#3a850f"/><rect x="8" y="12" width="1" height="1" fill="#3a850f"/><rect x="10" y="12" width="1" height="1" fill="#3a850f"/><path d="M7.8 15.8 V13.2 Q7.8 10.9 10 10.9 H13.4 Q15.9 10.9 15.9 13.2 V15.8 Z" fill="#2c4aa0" stroke="#2a1760" stroke-width="0.9"/><path d="M10.3 11 L11.6 13.2 L12.9 11 Z" fill="#c9d6f2"/><ellipse cx="11.6" cy="8.3" rx="2.7" ry="3" fill="#e58a1a"/><circle cx="11.2" cy="7.6" r="1.3" fill="#f6ae4a"/></svg>
<div class="tn" style="left:48px;top:45px;letter-spacing:0px">00</div>
<div class="abs" style="left:13px;top:69px;width:11px;height:1px;background:repeating-linear-gradient(90deg,#808080 0 1px,#fff 1px 2px)"></div>
<svg class="ticon" style="left:24px;top:61px" width="16" height="16" viewBox="0 0 16 16"><rect x="1" y="0" width="14" height="5" rx="1" fill="#3a850f"/><rect x="2" y="1" width="2" height="3" fill="#84d04c"/><rect x="5" y="1" width="9" height="3" fill="#fff"/><rect x="6" y="2" width="1" height="1" fill="#3a850f"/><rect x="8" y="2" width="1" height="1" fill="#3a850f"/><rect x="10" y="2" width="1" height="1" fill="#3a850f"/><rect x="0" y="5" width="14" height="5" rx="1" fill="#b3252b"/><rect x="1" y="6" width="2" height="3" fill="#ea6b6b"/><rect x="4" y="6" width="9" height="3" fill="#fff"/><rect x="5" y="7" width="1" height="1" fill="#b3252b"/><rect x="7" y="7" width="1" height="1" fill="#b3252b"/><rect x="9" y="7" width="1" height="1" fill="#b3252b"/><rect x="1" y="10" width="14" height="5" rx="1" fill="#3a850f"/><rect x="2" y="11" width="2" height="3" fill="#84d04c"/><rect x="5" y="11" width="9" height="3" fill="#fff"/><rect x="6" y="12" width="1" height="1" fill="#3a850f"/><rect x="8" y="12" width="1" height="1" fill="#3a850f"/><rect x="10" y="12" width="1" height="1" fill="#3a850f"/></svg>
<div class="tn" style="left:48px;top:63px;letter-spacing:0px">01</div>
<div class="abs" style="left:13px;top:87px;width:11px;height:1px;background:repeating-linear-gradient(90deg,#808080 0 1px,#fff 1px 2px)"></div>
<svg class="ticon" style="left:24px;top:79px" width="16" height="16" viewBox="0 0 16 16"><rect x="1" y="0" width="14" height="5" rx="1" fill="#3a850f"/><rect x="2" y="1" width="2" height="3" fill="#84d04c"/><rect x="5" y="1" width="9" height="3" fill="#fff"/><rect x="6" y="2" width="1" height="1" fill="#3a850f"/><rect x="8" y="2" width="1" height="1" fill="#3a850f"/><rect x="10" y="2" width="1" height="1" fill="#3a850f"/><rect x="0" y="5" width="14" height="5" rx="1" fill="#b3252b"/><rect x="1" y="6" width="2" height="3" fill="#ea6b6b"/><rect x="4" y="6" width="9" height="3" fill="#fff"/><rect x="5" y="7" width="1" height="1" fill="#b3252b"/><rect x="7" y="7" width="1" height="1" fill="#b3252b"/><rect x="9" y="7" width="1" height="1" fill="#b3252b"/><rect x="1" y="10" width="14" height="5" rx="1" fill="#3a850f"/><rect x="2" y="11" width="2" height="3" fill="#84d04c"/><rect x="5" y="11" width="9" height="3" fill="#fff"/><rect x="6" y="12" width="1" height="1" fill="#3a850f"/><rect x="8" y="12" width="1" height="1" fill="#3a850f"/><rect x="10" y="12" width="1" height="1" fill="#3a850f"/></svg>
<div class="tn" style="left:48px;top:81px;letter-spacing:0px">02</div>
<div class="abs" style="left:13px;top:105px;width:11px;height:1px;background:repeating-linear-gradient(90deg,#808080 0 1px,#fff 1px 2px)"></div>
<svg class="ticon" style="left:24px;top:97px" width="16" height="16" viewBox="0 0 16 16"><rect x="1" y="0" width="14" height="5" rx="1" fill="#3a850f"/><rect x="2" y="1" width="2" height="3" fill="#84d04c"/><rect x="5" y="1" width="9" height="3" fill="#fff"/><rect x="6" y="2" width="1" height="1" fill="#3a850f"/><rect x="8" y="2" width="1" height="1" fill="#3a850f"/><rect x="10" y="2" width="1" height="1" fill="#3a850f"/><rect x="0" y="5" width="14" height="5" rx="1" fill="#b3252b"/><rect x="1" y="6" width="2" height="3" fill="#ea6b6b"/><rect x="4" y="6" width="9" height="3" fill="#fff"/><rect x="5" y="7" width="1" height="1" fill="#b3252b"/><rect x="7" y="7" width="1" height="1" fill="#b3252b"/><rect x="9" y="7" width="1" height="1" fill="#b3252b"/><rect x="1" y="10" width="14" height="5" rx="1" fill="#3a850f"/><rect x="2" y="11" width="2" height="3" fill="#84d04c"/><rect x="5" y="11" width="9" height="3" fill="#fff"/><rect x="6" y="12" width="1" height="1" fill="#3a850f"/><rect x="8" y="12" width="1" height="1" fill="#3a850f"/><rect x="10" y="12" width="1" height="1" fill="#3a850f"/><path d="M7.8 15.8 V13.2 Q7.8 10.9 10 10.9 H13.4 Q15.9 10.9 15.9 13.2 V15.8 Z" fill="#2c4aa0" stroke="#2a1760" stroke-width="0.9"/><path d="M10.3 11 L11.6 13.2 L12.9 11 Z" fill="#c9d6f2"/><ellipse cx="11.6" cy="8.3" rx="2.7" ry="3" fill="#e58a1a"/><circle cx="11.2" cy="7.6" r="1.3" fill="#f6ae4a"/></svg>
<div class="tn" style="left:48px;top:99px;letter-spacing:0px">04</div>
<div class="abs" style="left:13px;top:123px;width:11px;height:1px;background:repeating-linear-gradient(90deg,#808080 0 1px,#fff 1px 2px)"></div>
<svg class="ticon" style="left:24px;top:115px" width="16" height="16" viewBox="0 0 16 16"><rect x="1" y="0" width="14" height="5" rx="1" fill="#3a850f"/><rect x="2" y="1" width="2" height="3" fill="#84d04c"/><rect x="5" y="1" width="9" height="3" fill="#fff"/><rect x="6" y="2" width="1" height="1" fill="#3a850f"/><rect x="8" y="2" width="1" height="1" fill="#3a850f"/><rect x="10" y="2" width="1" height="1" fill="#3a850f"/><rect x="0" y="5" width="14" height="5" rx="1" fill="#b3252b"/><rect x="1" y="6" width="2" height="3" fill="#ea6b6b"/><rect x="4" y="6" width="9" height="3" fill="#fff"/><rect x="5" y="7" width="1" height="1" fill="#b3252b"/><rect x="7" y="7" width="1" height="1" fill="#b3252b"/><rect x="9" y="7" width="1" height="1" fill="#b3252b"/><rect x="1" y="10" width="14" height="5" rx="1" fill="#3a850f"/><rect x="2" y="11" width="2" height="3" fill="#84d04c"/><rect x="5" y="11" width="9" height="3" fill="#fff"/><rect x="6" y="12" width="1" height="1" fill="#3a850f"/><rect x="8" y="12" width="1" height="1" fill="#3a850f"/><rect x="10" y="12" width="1" height="1" fill="#3a850f"/><path d="M7.8 15.8 V13.2 Q7.8 10.9 10 10.9 H13.4 Q15.9 10.9 15.9 13.2 V15.8 Z" fill="#2c4aa0" stroke="#2a1760" stroke-width="0.9"/><path d="M10.3 11 L11.6 13.2 L12.9 11 Z" fill="#c9d6f2"/><ellipse cx="11.6" cy="8.3" rx="2.7" ry="3" fill="#e58a1a"/><circle cx="11.2" cy="7.6" r="1.3" fill="#f6ae4a"/></svg>
<div class="tn" style="left:48px;top:117px;letter-spacing:0px">05</div>
<div class="abs" style="left:13px;top:141px;width:11px;height:1px;background:repeating-linear-gradient(90deg,#808080 0 1px,#fff 1px 2px)"></div>
<svg class="ticon" style="left:24px;top:133px" width="16" height="16" viewBox="0 0 16 16"><rect x="1" y="0" width="14" height="5" rx="1" fill="#3a850f"/><rect x="2" y="1" width="2" height="3" fill="#84d04c"/><rect x="5" y="1" width="9" height="3" fill="#fff"/><rect x="6" y="2" width="1" height="1" fill="#3a850f"/><rect x="8" y="2" width="1" height="1" fill="#3a850f"/><rect x="10" y="2" width="1" height="1" fill="#3a850f"/><rect x="0" y="5" width="14" height="5" rx="1" fill="#b3252b"/><rect x="1" y="6" width="2" height="3" fill="#ea6b6b"/><rect x="4" y="6" width="9" height="3" fill="#fff"/><rect x="5" y="7" width="1" height="1" fill="#b3252b"/><rect x="7" y="7" width="1" height="1" fill="#b3252b"/><rect x="9" y="7" width="1" height="1" fill="#b3252b"/><rect x="1" y="10" width="14" height="5" rx="1" fill="#3a850f"/><rect x="2" y="11" width="2" height="3" fill="#84d04c"/><rect x="5" y="11" width="9" height="3" fill="#fff"/><rect x="6" y="12" width="1" height="1" fill="#3a850f"/><rect x="8" y="12" width="1" height="1" fill="#3a850f"/><rect x="10" y="12" width="1" height="1" fill="#3a850f"/><path d="M7.8 15.8 V13.2 Q7.8 10.9 10 10.9 H13.4 Q15.9 10.9 15.9 13.2 V15.8 Z" fill="#2c4aa0" stroke="#2a1760" stroke-width="0.9"/><path d="M10.3 11 L11.6 13.2 L12.9 11 Z" fill="#c9d6f2"/><ellipse cx="11.6" cy="8.3" rx="2.7" ry="3" fill="#e58a1a"/><circle cx="11.2" cy="7.6" r="1.3" fill="#f6ae4a"/></svg>
<div class="tn" style="left:48px;top:135px;letter-spacing:-0.16px">06 Profibus</div>
<div class="abs" style="left:13px;top:159px;width:11px;height:1px;background:repeating-linear-gradient(90deg,#808080 0 1px,#fff 1px 2px)"></div>
<svg class="ticon" style="left:24px;top:151px" width="16" height="16" viewBox="0 0 16 16"><rect x="1" y="0" width="14" height="5" rx="1" fill="#3a850f"/><rect x="2" y="1" width="2" height="3" fill="#84d04c"/><rect x="5" y="1" width="9" height="3" fill="#fff"/><rect x="6" y="2" width="1" height="1" fill="#3a850f"/><rect x="8" y="2" width="1" height="1" fill="#3a850f"/><rect x="10" y="2" width="1" height="1" fill="#3a850f"/><rect x="0" y="5" width="14" height="5" rx="1" fill="#b3252b"/><rect x="1" y="6" width="2" height="3" fill="#ea6b6b"/><rect x="4" y="6" width="9" height="3" fill="#fff"/><rect x="5" y="7" width="1" height="1" fill="#b3252b"/><rect x="7" y="7" width="1" height="1" fill="#b3252b"/><rect x="9" y="7" width="1" height="1" fill="#b3252b"/><rect x="1" y="10" width="14" height="5" rx="1" fill="#3a850f"/><rect x="2" y="11" width="2" height="3" fill="#84d04c"/><rect x="5" y="11" width="9" height="3" fill="#fff"/><rect x="6" y="12" width="1" height="1" fill="#3a850f"/><rect x="8" y="12" width="1" height="1" fill="#3a850f"/><rect x="10" y="12" width="1" height="1" fill="#3a850f"/></svg>
<div class="tn" style="left:48px;top:153px;letter-spacing:-0.6px">07 PLC</div>
<div class="abs" style="left:13px;top:177px;width:11px;height:1px;background:repeating-linear-gradient(90deg,#808080 0 1px,#fff 1px 2px)"></div>
<svg class="ticon" style="left:24px;top:169px" width="16" height="16" viewBox="0 0 16 16"><rect x="1" y="0" width="14" height="5" rx="1" fill="#3a850f"/><rect x="2" y="1" width="2" height="3" fill="#84d04c"/><rect x="5" y="1" width="9" height="3" fill="#fff"/><rect x="6" y="2" width="1" height="1" fill="#3a850f"/><rect x="8" y="2" width="1" height="1" fill="#3a850f"/><rect x="10" y="2" width="1" height="1" fill="#3a850f"/><rect x="0" y="5" width="14" height="5" rx="1" fill="#b3252b"/><rect x="1" y="6" width="2" height="3" fill="#ea6b6b"/><rect x="4" y="6" width="9" height="3" fill="#fff"/><rect x="5" y="7" width="1" height="1" fill="#b3252b"/><rect x="7" y="7" width="1" height="1" fill="#b3252b"/><rect x="9" y="7" width="1" height="1" fill="#b3252b"/><rect x="1" y="10" width="14" height="5" rx="1" fill="#3a850f"/><rect x="2" y="11" width="2" height="3" fill="#84d04c"/><rect x="5" y="11" width="9" height="3" fill="#fff"/><rect x="6" y="12" width="1" height="1" fill="#3a850f"/><rect x="8" y="12" width="1" height="1" fill="#3a850f"/><rect x="10" y="12" width="1" height="1" fill="#3a850f"/></svg>
<div class="tn" style="left:48px;top:171px;letter-spacing:-0.25px">08 User</div>
<div class="abs" style="left:13px;top:195px;width:11px;height:1px;background:repeating-linear-gradient(90deg,#808080 0 1px,#fff 1px 2px)"></div>
<svg class="ticon" style="left:24px;top:187px" width="16" height="16" viewBox="0 0 16 16"><rect x="1" y="0" width="14" height="5" rx="1" fill="#3a850f"/><rect x="2" y="1" width="2" height="3" fill="#84d04c"/><rect x="5" y="1" width="9" height="3" fill="#fff"/><rect x="6" y="2" width="1" height="1" fill="#3a850f"/><rect x="8" y="2" width="1" height="1" fill="#3a850f"/><rect x="10" y="2" width="1" height="1" fill="#3a850f"/><rect x="0" y="5" width="14" height="5" rx="1" fill="#b3252b"/><rect x="1" y="6" width="2" height="3" fill="#ea6b6b"/><rect x="4" y="6" width="9" height="3" fill="#fff"/><rect x="5" y="7" width="1" height="1" fill="#b3252b"/><rect x="7" y="7" width="1" height="1" fill="#b3252b"/><rect x="9" y="7" width="1" height="1" fill="#b3252b"/><rect x="1" y="10" width="14" height="5" rx="1" fill="#3a850f"/><rect x="2" y="11" width="2" height="3" fill="#84d04c"/><rect x="5" y="11" width="9" height="3" fill="#fff"/><rect x="6" y="12" width="1" height="1" fill="#3a850f"/><rect x="8" y="12" width="1" height="1" fill="#3a850f"/><rect x="10" y="12" width="1" height="1" fill="#3a850f"/></svg>
<div class="tn" style="left:48px;top:189px;letter-spacing:-0.16px">09 EtherCAT</div>
</div>
<div id="menu">
<div class="gut"></div>
<div class="mi" style="top:8px">Hide group</div>
<div class="abs" style="left:2px;top:24px;width:115px;height:23px;border:1px solid #aecff7;border-radius:3px;background:linear-gradient(#f4f8fd,#e4eefb)"></div>
<div class="abs" style="left:28px;top:26px;width:1px;height:19px;background:#dbe4f0;border-right:1px solid #f8fbff;box-sizing:content-box"></div>
<div class="abs" style="left:-1px;top:21px;width:121px;height:30px;border:3px solid #ea1722"></div>
<div class="mi" style="top:30px;color:#000">Unhide group</div>
<div class="abs" style="left:29px;top:53px;width:91px;height:1px;background:#e4e4e4;border-bottom:1px solid #fafafa;box-sizing:content-box"></div>
<div class="mi" style="top:62px">Write group</div>
<div class="mi" style="top:84px">Read group</div>
</div>
</body></html>
